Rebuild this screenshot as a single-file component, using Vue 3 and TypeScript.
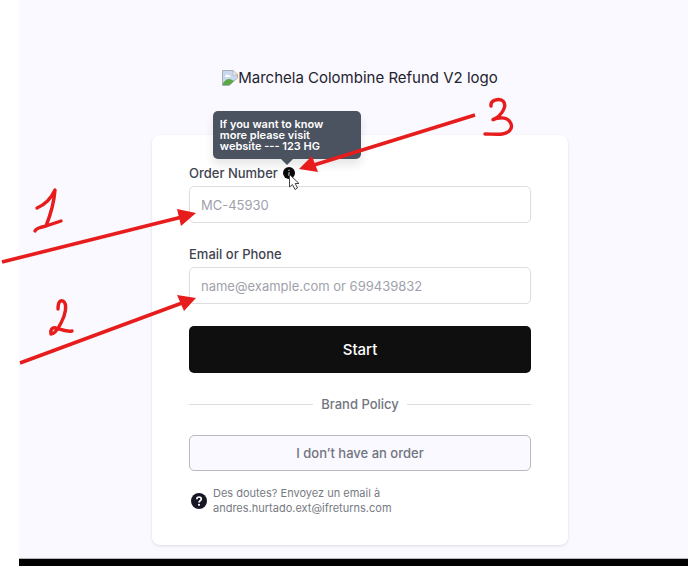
<script setup lang="ts">
import { ref } from 'vue'

interface Arrow {
  x1: number
  y1: number
  x2: number
  y2: number
  head: string
}

const orderNumber = ref('')
const contact = ref('')

const arrows: Arrow[] = [
  { x1: 2, y1: 262, x2: 182, y2: 217, head: '196,213 177,209 181,226' },
  { x1: 20, y1: 363, x2: 182, y2: 303, head: '196,298 177,295 184,311' },
  { x1: 475, y1: 115, x2: 314, y2: 165, head: '299,169 312,156 318,172' },
]

const numerals: string[] = [
  'M37 208 Q49 203 55 190 C54 203 50 216 46 226 M35 231 Q36 228 46 226 L61 221',
  'M58 309 C58 302 60 300 63 301 C68 304 65 316 61 323 C58 329 55 334 51 334 C50 330 52 327 56 328 C62 330 66 332 72 331',
  'M491 106 C490 100 499 98 503 101 C508 106 501 116 494 119 C491 121 495 118 500 118 C509 117 514 125 510 130 C506 136 495 134 485 134',
]
</script>

<template>
  <div class="page">
    <main class="panel">
      <div class="logo" role="img" aria-label="Marchela Colombine Refund V2 logo">
        <svg class="broken" viewBox="0 0 16 16" aria-hidden="true">
          <path d="M.5 .5H11L15.5 5V8L7 15.5H.5Z" fill="#c9d8ee" stroke="#a9adb5" />
          <path d="M11 .5V5H15.5Z" fill="#fff" stroke="#b4b8bf" />
          <path d="M3 6.5a2 2 0 0 1 3.500-1.200a1.500 1.500 0 0 1 2 1.700H3Z" fill="#fff" />
          <path d="M1 15V13C4 9 7 8 10 10L12 11L7.500 15Z" fill="#58a945" />
        </svg>
        <span>Marchela Colombine Refund V2 logo</span>
      </div>

      <form class="card" @submit.prevent>
        <div class="field">
          <div class="label-row">
            <label for="order">Order Number</label>
            <span class="info">
              <svg viewBox="0 0 12 12" aria-hidden="true">
                <circle cx="6" cy="6" r="6" fill="#08080a" />
                <path d="M6 5.200V9M6 2.800V4" stroke="#bbb" stroke-width="1.300" />
              </svg>
              <span class="tooltip" role="tooltip">If you want to know more please visit website --- 123 HG</span>
            </span>
          </div>
          <input id="order" v-model="orderNumber" type="text" placeholder="MC-45930" />
        </div>

        <div class="field">
          <div class="label-row"><label for="contact">Email or Phone</label></div>
          <input id="contact" v-model="contact" type="text" placeholder="name@example.com or 699439832" />
        </div>

        <button class="start" type="submit">Start</button>
        <div class="divider"><span>Brand Policy</span></div>
        <button class="no-order" type="button">I don’t have an order</button>

        <div class="help">
          <svg viewBox="0 0 16 16" aria-hidden="true">
            <circle cx="8" cy="8" r="8" fill="#171624" />
            <path d="M5.800 6.200C5.800 3.300 10.300 3.300 10.300 6.100C10.300 7.800 8 7.700 8 9.500" fill="none" stroke="#fff" stroke-width="1.700" />
            <circle cx="8" cy="11.800" r="1.100" fill="#fff" />
          </svg>
          <p>Des doutes? Envoyez un email à<br />andres.hurtado.ext@ifreturns.com</p>
        </div>
      </form>
    </main>
    <div class="bottom-bar"></div>

    <svg class="annotations" viewBox="0 0 688 566" aria-hidden="true">
      <path
        d="M289.500 174.500V187L292.500 184.500L295 189.500L297.500 188L295.200 183.500H299Z"
        fill="#fff"
        stroke="#444"
      />
      <g v-for="(arrow, i) in arrows" :key="i">
        <line :x1="arrow.x1" :y1="arrow.y1" :x2="arrow.x2" :y2="arrow.y2" stroke="#e71d1d" stroke-width="3.600" />
        <polygon :points="arrow.head" fill="#e71d1d" />
      </g>
      <path
        v-for="stroke in numerals"
        :key="stroke"
        :d="stroke"
        fill="none"
        stroke="#e71d1d"
        stroke-width="3.400"
        stroke-linecap="round"
        stroke-linejoin="round"
      />
    </svg>
  </div>
</template>

<style>
body {
  margin: 0;
  background: #fff;
}
</style>

<style scoped>
* {
  box-sizing: border-box;
}
.page {
  position: relative;
  display: flex;
  flex-direction: column;
  min-height: 100vh;
  padding-left: 19px;
  font-family: Inter, "Liberation Sans", sans-serif;
  color: #23232d;
}
.panel {
  flex: 1;
  display: flex;
  flex-direction: column;
  align-items: center;
  gap: 45px;
  padding: 66px 0 13px 13px;
  background: #faf9ff;
  border-bottom: 1px solid #b8b8bc;
}
.bottom-bar {
  height: 7px;
  background: #000;
}
.logo {
  display: flex;
  align-items: center;
  font-size: 15px;
  line-height: 24px;
}
.broken {
  width: 16px;
  height: 16px;
}
.card {
  display: flex;
  flex-direction: column;
  gap: 22px;
  width: 100%;
  max-width: 416px;
  padding: 29px 37px;
  background: #fff;
  border-radius: 8px;
  box-shadow: 0 1px 3px rgba(20, 20, 50, 0.12);
}
.field {
  display: flex;
  flex-direction: column;
  gap: 4px;
}
.label-row {
  display: flex;
  align-items: center;
  gap: 5px;
  font-size: 13px;
  font-weight: 500;
  line-height: 18px;
  color: #41444f;
}
.info {
  position: relative;
  display: flex;
}
.info svg {
  width: 12px;
  height: 12px;
}
.tooltip {
  position: absolute;
  left: -70px;
  bottom: 20px;
  width: 148px;
  padding: 8px 28px 7px 7px;
  border-radius: 5px;
  background: #4b5260;
  box-shadow: 0 6px 10px rgba(0, 0, 0, 0.1);
  color: #fff;
  font-size: 11px;
  font-weight: 600;
  line-height: 11px;
}
.tooltip::after {
  content: "";
  position: absolute;
  top: 100%;
  left: 50%;
  margin-left: -6px;
  border: 6px solid transparent;
  border-top-color: #4b5260;
  border-bottom-width: 0;
}
input,
button {
  width: 100%;
  margin: 0;
  border-radius: 5px;
  font-family: inherit;
}
input {
  height: 37px;
  padding: 0 11px;
  border: 1px solid #dedee2;
  background: #fff;
  font-size: 13px;
  color: #23232d;
}
input::placeholder {
  color: #a0a2ab;
  opacity: 1;
}
.start {
  height: 47px;
  border: 0;
  background: #0f0f10;
  color: #fff;
  font-size: 15px;
  font-weight: 500;
}
.divider {
  display: flex;
  align-items: center;
  gap: 8px;
  font-size: 13px;
  font-weight: 500;
  line-height: 18px;
  color: #72757f;
}
.divider::before,
.divider::after {
  content: "";
  flex: 1;
  height: 1px;
  background: #dcdce1;
}
.no-order {
  height: 36px;
  border: 1px solid #b9bac0;
  background: #faf9ff;
  color: #72757f;
  font-size: 13px;
  font-weight: 500;
}
.help {
  display: flex;
  align-items: center;
  gap: 6px;
  margin-top: -7px;
  padding-left: 2px;
}
.help svg {
  width: 16px;
  height: 16px;
}
.help p {
  margin: 0;
  font-size: 11px;
  line-height: 15px;
  color: #777a83;
}
.annotations {
  position: absolute;
  inset: 0;
  width: 100%;
  height: 100%;
  pointer-events: none;
}
</style>
